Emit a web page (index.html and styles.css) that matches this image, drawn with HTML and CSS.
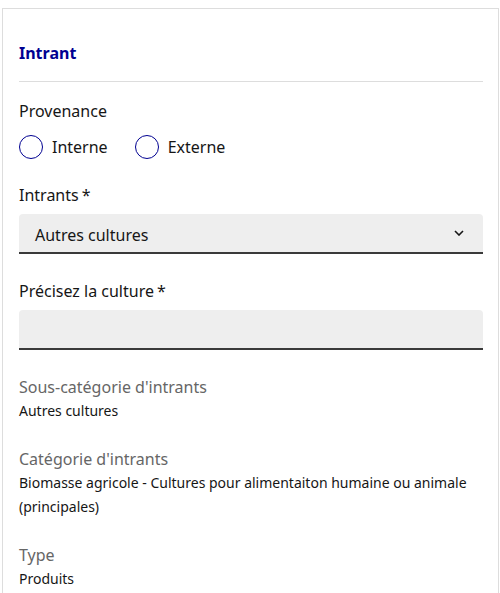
FILE: index.html
```html
<!DOCTYPE html>
<html lang="fr">
<head>
<meta charset="utf-8">
<link rel="stylesheet" href="styles.css">
</head>
<body>
<div class="card">
  <h3 class="title">Intrant</h3>
  <hr class="sep">
  <fieldset class="group">
    <legend class="label">Provenance</legend>
    <div class="radios">
      <label class="radio"><span class="circle"></span>Interne</label>
      <label class="radio"><span class="circle"></span>Externe</label>
    </div>
  </fieldset>
  <div class="field">
    <div class="label">Intrants<span class="req">*</span></div>
    <div class="select">
      <span class="sel-text">Autres cultures</span>
      <svg class="chev" width="10" height="6" viewBox="0 0 10 6"><path d="M1 1 L5 5 L9 1" fill="none" stroke="#161616" stroke-width="1.6"/></svg>
    </div>
  </div>
  <div class="field field-2">
    <div class="label">Précisez la culture<span class="req">*</span></div>
    <div class="input"></div>
  </div>
  <div class="info">
    <div class="ilabel">Sous-catégorie d'intrants</div>
    <div class="ivalue">Autres cultures</div>
  </div>
  <div class="info">
    <div class="ilabel">Catégorie d'intrants</div>
    <div class="ivalue">Biomasse agricole - Cultures pour alimentaiton humaine ou animale (principales)</div>
  </div>
  <div class="info">
    <div class="ilabel">Type</div>
    <div class="ivalue">Produits</div>
  </div>
</div>
</body>
</html>
```
FILE: styles.css
```css
html, body {
  margin: 0;
  padding: 0;
  background: #fff;
}
body {
  font-family: "Noto Sans", "DejaVu Sans", sans-serif;
  color: #161616;
  overflow: hidden;
  height: 100vh;
}
.card {
  box-sizing: border-box;
  margin: 8px 1px 0 2px;
  border: 1px solid #ddd;
  border-bottom: none;
  padding: 32px 15px 0 16px;
  height: calc(100vh - 8px);
  overflow: hidden;
}
.title {
  margin: 0;
  font-size: 16px;
  line-height: 24px;
  font-weight: 700;
  color: #000091;
}
.sep {
  border: none;
  border-top: 1px solid #ddd;
  margin: 16px 0 0 0;
  height: 0;
}
.group {
  border: none;
  margin: 17px 0 0 0;
  padding: 0;
}
.label {
  font-size: 16px;
  line-height: 24px;
  padding: 0;
}
.req {
  margin-left: 3px;
}
.radios {
  display: flex;
  gap: 27px;
  margin-top: 12px;
}
.radio {
  display: flex;
  align-items: center;
  gap: 9px;
  font-size: 16px;
  line-height: 24px;
}
.circle {
  width: 22px;
  height: 22px;
  border: 1px solid #000091;
  border-radius: 50%;
}
.field {
  margin-top: 24px;
}
.field-2 {
  margin-top: 25px;
}
.select, .input {
  margin-top: 7px;
  height: 38px;
  background: #eee;
  border-bottom: 2px solid #3a3a3a;
  border-radius: 4px 4px 0 0;
}
.select {
  display: flex;
  align-items: center;
  justify-content: space-between;
  padding: 0 19px 0 16px;
  font-size: 16px;
}
.sel-text {
  padding-top: 3px;
}
.chev {
  display: block;
}
.info {
  margin-top: 25px;
}
.info + .info {
  margin-top: 24px;
}
.ilabel {
  font-size: 16px;
  line-height: 24px;
  color: #666;
}
.ivalue {
  font-size: 14px;
  line-height: 24px;
  color: #161616;
}
```
